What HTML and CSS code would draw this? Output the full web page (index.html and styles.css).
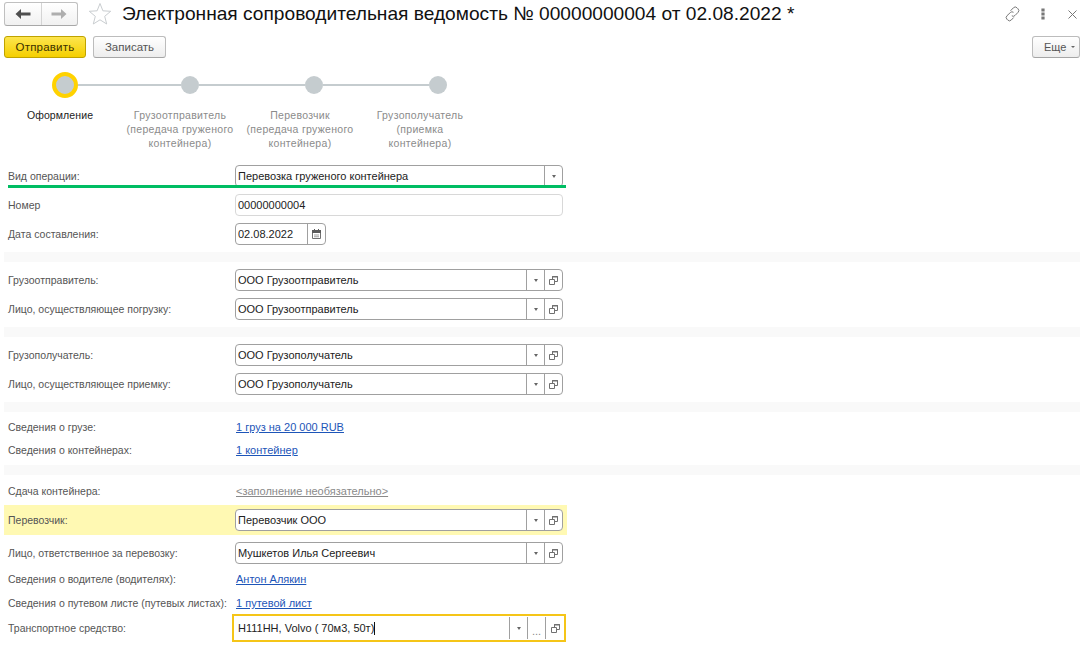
FILE: index.html
```html
<!DOCTYPE html>
<html lang="ru">
<head>
<meta charset="utf-8">
<title>Электронная сопроводительная ведомость</title>
<link rel="stylesheet" href="styles.css">
</head>
<body>
<svg class="defs" width="0" height="0" aria-hidden="true">
  <symbol id="copy" viewBox="0 0 9 9">
    <path d="M3.500 3V.5h5v5H6" fill="none" stroke="#707070"/>
    <path d="M3 .2h6v1.300H3z" fill="#707070"/>
    <path d="M.5 3.500h5v5h-5z" fill="none" stroke="#707070"/>
  </symbol>
</svg>
<header class="top">
  <div class="nav">
    <button class="nav-btn"><svg width="16" height="10" viewBox="0 0 16 10"><path d="M6 0 .5 5 6 10V6.500h9.500v-3H6z" fill="#4f4f4f"/></svg></button>
    <button class="nav-btn"><svg width="16" height="10" viewBox="0 0 16 10"><path d="M10 0l5.500 5L10 10V6.500H.5v-3H10z" fill="#aeaeae"/></svg></button>
  </div>
  <svg class="star" width="24" height="24" viewBox="0 0 24 24"><path d="M12 1.500l2.900 7.300 7.800.5-6 5 2 7.700L12 17.800l-6.700 4.200 2-7.700-6-5 7.800-.5z" fill="#fff" stroke="#c9cdd0"/></svg>
  <h1 class="title">Электронная сопроводительная ведомость № 00000000004 от 02.08.2022 *</h1>
  <div class="win-tools">
    <svg class="tool-link" width="16" height="16" viewBox="0 0 16 16"><g fill="none" stroke="#777"><path d="M6.500 4.800l2.900-3a2.500 2.500 0 0 1 3.600 0l1 1a2.500 2.500 0 0 1 0 3.600L11 9.500a2.500 2.500 0 0 1-3.200.3"/><path d="M9.500 6.300a2.500 2.500 0 0 0-3.200.3L3 9.700a2.500 2.500 0 0 0 0 3.600l.7.700a2.500 2.500 0 0 0 3.600 0l2.400-2.500"/></g></svg>
    <svg class="tool-dots" width="4" height="12" viewBox="0 0 4 12"><g fill="#777"><rect x=".4" y=".5" width="3.200" height="3"/><rect x=".4" y="4.500" width="3.200" height="3"/><rect x=".4" y="8.500" width="3.200" height="3"/></g></svg>
    <svg class="tool-close" width="9" height="9" viewBox="0 0 9 9"><path d="M.5.5l8 8M8.500.5l-8 8" stroke="#777" fill="none"/></svg>
  </div>
</header>
<div class="actions">
  <button class="btn btn-primary">Отправить</button>
  <button class="btn">Записать</button>
  <button class="btn btn-more">Еще<span class="more-arrow"></span></button>
</div>
<div class="stepper">
  <div class="track">
    <span class="dot dot-current"></span><span class="line"></span>
    <span class="dot"></span><span class="line"></span>
    <span class="dot"></span><span class="line"></span>
    <span class="dot"></span>
  </div>
  <ol class="step-labels">
    <li class="step-label current">Оформление</li>
    <li class="step-label">Грузоотправитель (передача груженого контейнера)</li>
    <li class="step-label">Перевозчик (передача груженого контейнера)</li>
    <li class="step-label">Грузополучатель (приемка контейнера)</li>
  </ol>
</div>
<main class="form">
  <section class="group group-first">
    <div class="row">
      <span class="label">Вид операции:</span>
      <div class="field wide"><span class="value">Перевозка груженого контейнера</span><span class="cell"><i class="tri"></i></span></div>
      <span class="green-line"></span>
    </div>
    <div class="row">
      <span class="label">Номер</span>
      <div class="field wide plain"><span class="value">00000000004</span></div>
    </div>
    <div class="row">
      <span class="label">Дата составления:</span>
      <div class="field date"><span class="value">02.08.2022</span><span class="cell"><svg width="9" height="10" viewBox="0 0 9 10"><path d="M.5 2h8v7.500h-8z" fill="none" stroke="#707070"/><path d="M0 1h9v3H0zM2 0h1v1H2zM6 0h1v1H6z" fill="#5a5a5a"/><path d="M2 5.500h5v1H2zM2 7.300h5v1H2z" fill="#a0a0a0"/></svg></span></div>
    </div>
  </section>
  <div class="band"></div>
  <section class="group">
    <div class="row">
      <span class="label">Грузоотправитель:</span>
      <div class="field wide"><span class="value">ООО Грузоотправитель</span><span class="cell"><i class="tri"></i></span><span class="cell"><svg class="copy" width="9" height="9"><use href="#copy"/></svg></span></div>
    </div>
    <div class="row">
      <span class="label">Лицо, осуществляющее погрузку:</span>
      <div class="field wide"><span class="value">ООО Грузоотправитель</span><span class="cell"><i class="tri"></i></span><span class="cell"><svg class="copy" width="9" height="9"><use href="#copy"/></svg></span></div>
    </div>
  </section>
  <div class="band"></div>
  <section class="group">
    <div class="row">
      <span class="label">Грузополучатель:</span>
      <div class="field wide"><span class="value">ООО Грузополучатель</span><span class="cell"><i class="tri"></i></span><span class="cell"><svg class="copy" width="9" height="9"><use href="#copy"/></svg></span></div>
    </div>
    <div class="row">
      <span class="label">Лицо, осуществляющее приемку:</span>
      <div class="field wide"><span class="value">ООО Грузополучатель</span><span class="cell"><i class="tri"></i></span><span class="cell"><svg class="copy" width="9" height="9"><use href="#copy"/></svg></span></div>
    </div>
  </section>
  <div class="band"></div>
  <section class="group group-links">
    <div class="row link-row"><span class="label">Сведения о грузе:</span><a class="link" href="#">1 груз на 20 000 RUB</a></div>
    <div class="row link-row"><span class="label">Сведения о контейнерах:</span><a class="link" href="#">1 контейнер</a></div>
  </section>
  <div class="band"></div>
  <section class="group group-carrier">
    <div class="row link-row"><span class="label">Сдача контейнера:</span><a class="link muted" href="#">&lt;заполнение необязательно&gt;</a></div>
    <div class="row highlighted">
      <span class="label">Перевозчик:</span>
      <div class="field wide"><span class="value">Перевозчик ООО</span><span class="cell"><i class="tri"></i></span><span class="cell"><svg class="copy" width="9" height="9"><use href="#copy"/></svg></span></div>
    </div>
    <div class="row row-responsible">
      <span class="label">Лицо, ответственное за перевозку:</span>
      <div class="field wide"><span class="value">Мушкетов Илья Сергеевич</span><span class="cell"><i class="tri"></i></span><span class="cell"><svg class="copy" width="9" height="9"><use href="#copy"/></svg></span></div>
    </div>
    <div class="row link-row row-driver"><span class="label">Сведения о водителе (водителях):</span><a class="link" href="#">Антон Алякин</a></div>
    <div class="row link-row row-waybill"><span class="label">Сведения о путевом листе (путевых листах):</span><a class="link" href="#">1 путевой лист</a></div>
    <div class="row focused-row">
      <span class="label">Транспортное средство:</span>
      <div class="field focused"><span class="value">Н111НН, Volvo ( 70м3, 50т)<span class="caret"></span></span><span class="cell"><i class="tri"></i></span><span class="cell dots-cell">...</span><span class="cell cell-last"><svg class="copy" width="9" height="9"><use href="#copy"/></svg></span></div>
    </div>
  </section>
</main>
</body>
</html>
```

FILE: styles.css
```css
* { box-sizing: border-box; }
html, body { margin: 0; padding: 0; }
body {
  width: 1085px;
  height: 647px;
  overflow: hidden;
  background: #fff;
  font: 11px "Liberation Sans", Arial, sans-serif;
  color: #333;
}
.defs { position: absolute; }
button { font: inherit; color: inherit; padding: 0; margin: 0; }

.top { display: flex; align-items: flex-start; height: 28px; padding: 2px 0 0 4px; }
.nav {
  display: flex;
  width: 74px;
  height: 24px;
  border: 1px solid #c0c0c0;
  border-bottom-color: #a8a8a8;
  border-radius: 3px;
  background: linear-gradient(#fff, #f1f1f1);
}
.nav-btn {
  flex: 1;
  border: 0;
  background: none;
  display: flex;
  align-items: center;
  justify-content: center;
}
.nav-btn + .nav-btn { border-left: 1px solid #d4d4d4; }
.star { margin: 0 0 0 10px; flex: none; }
.title {
  margin: 0 0 0 10px;
  font-size: 19.150px;
  font-weight: 400;
  color: #111;
  white-space: nowrap;
  line-height: 24px;
  flex: 1;
}
.win-tools { display: flex; align-items: center; height: 24px; padding-right: 8px; }
.tool-dots { margin-left: 21px; }
.tool-close { margin-left: 23px; }

.actions { display: flex; gap: 7px; padding: 8px 5px 0 4px; }
.btn {
  height: 22px;
  width: 73px;
  font-size: 11.500px;
  border: 1px solid #bcbcbc;
  border-bottom-color: #a5a5a5;
  border-radius: 3px;
  background: linear-gradient(#fff, #ededed);
  color: #555;
}
.btn-primary {
  width: 82px;
  border-color: #bfa300;
  background: linear-gradient(#fde54e, #f5cf00);
  color: #3a3000;
  letter-spacing: .2px;
}
.btn-more {
  width: 48px;
  margin-left: auto;
  display: flex;
  align-items: center;
  padding-left: 11px;
  gap: 5px;
  font-size: 11px;
}
.more-arrow { width: 0; height: 0; border: 2px solid transparent; border-top: 2px solid #666; border-bottom: 0; }

.stepper { height: 107px; padding-top: 14px; }
.track { display: flex; align-items: center; height: 26px; padding-left: 52px; }
.dot {
  width: 18px;
  height: 18px;
  border-radius: 50%;
  background: #c5cccf;
  flex: none;
}
.dot-current { width: 26px; height: 26px; border: 4px solid #ffd200; }
.line { width: 106px; height: 2px; background: #c5cccf; flex: none; }
.dot-current + .line { width: 103px; }
.step-labels {
  list-style: none;
  display: flex;
  margin: 10px 0 0;
  padding: 0;
}
.step-label {
  width: 120px;
  flex: none;
  text-align: center;
  line-height: 14px;
  padding: 0 6px;
  font-size: 10.500px;
  letter-spacing: .3px;
  color: #8b8b8b;
}
.current { color: #222; letter-spacing: .1px; }

.form { padding: 0 5px 0 4px; }
.group { padding-top: 7px; padding-left: 4px; }
.group-first { padding-top: 0; }
.band { height: 10px; background: #f9f9f9; margin-top: 7px; }
.row {
  position: relative;
  display: flex;
  align-items: center;
  height: 22px;
  margin-bottom: 7px;
}
.group .row:last-child { margin-bottom: 0; }
.label { width: 227px; flex: none; color: #555; white-space: nowrap; font-size: 10.500px; }
.field {
  display: flex;
  align-items: stretch;
  height: 22px;
  border: 1px solid #a0a0a0;
  border-radius: 4px;
  background: #fff;
  color: #222;
}
.wide { width: 328px; }
.plain { border-color: #d8d8d8; }
.date { width: 91px; }
.value { flex: 1; padding-left: 2px; line-height: 20px; white-space: nowrap; overflow: hidden; }
.cell {
  width: 18px;
  flex: none;
  border-left: 1px solid #a0a0a0;
  display: flex;
  align-items: center;
  justify-content: center;
}
.tri { width: 0; height: 0; border: 2.500px solid transparent; border-top: 3px solid #666; border-bottom: 0; }
.green-line {
  position: absolute;
  left: 0;
  top: 20px;
  width: 558px;
  height: 3px;
  background: #00bd63;
}
.link-row { height: 14px; }
.link { color: #1d55b8; margin-left: 1px; text-decoration: underline; white-space: nowrap; }
.muted { color: #8a8a8a; }

.group-links { padding-top: 8px; padding-bottom: 1px; }
.group-links .link-row { margin-bottom: 9px; }
.group-carrier { padding-top: 9px; }
.highlighted {
  height: 30px;
  width: 563px;
  margin-left: -4px;
  padding-left: 4px;
  background: #fff9b3;
}
.row-responsible { margin-bottom: 8px; }
.row-driver { margin-bottom: 10px; }
.row-waybill { margin-bottom: 4px; }
.focused-row { height: 28px; }
.focused {
  width: 334px;
  height: 28px;
  margin-left: -3px;
  border: 2px solid #f5c518;
  border-radius: 0;
}
.focused .value { line-height: 24px; padding-left: 4px; }
.focused .cell { margin: 1px 0; }
.focused .cell-last { width: 19px; }
.dots-cell { color: #888; line-height: 1; padding-top: 6px; }
.caret { display: inline-block; width: 1px; height: 13px; background: #111; vertical-align: -3px; }
```
